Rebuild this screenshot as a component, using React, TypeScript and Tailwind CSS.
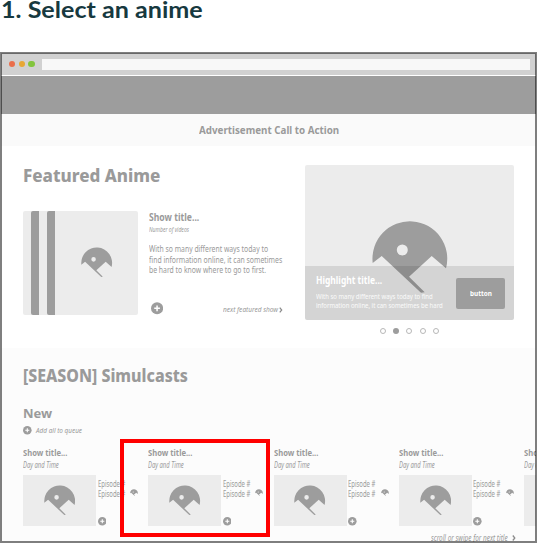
import { useLayoutEffect, useRef, useState } from "react";
import type { ReactNode } from "react";

/* A single line of text, condensed or widened to the given width. */
function Line({ w, className = "", children }: { w: number; className?: string; children: ReactNode }) {
  const ref = useRef<HTMLSpanElement>(null);
  const [scale, setScale] = useState(1);
  useLayoutEffect(() => {
    if (ref.current) setScale(w / ref.current.offsetWidth);
  }, [w]);
  return (
    <div className={`whitespace-nowrap ${className}`} style={{ width: w }}>
      <span ref={ref} className="inline-block origin-left align-top" style={{ transform: `scaleX(${scale})` }}>
        {children}
      </span>
    </div>
  );
}

function Logo({ className = "" }: { className?: string }) {
  return (
    <svg viewBox="0 0 76 74" className={className} fill="#9d9d9d">
      <path
        fillRule="evenodd"
        d="M.7 43 9.7 36 49 72.7l3.7-.4L37 56.7 59.7 36 74 48.3A37.4 37.4 0 1 0 .7 43ZM30.3 24.5a5.5 5.5 0 1 1 0 11 5.5 5.5 0 0 1 0-11Z"
      />
    </svg>
  );
}

function Plus({ className = "" }: { className?: string }) {
  return (
    <svg viewBox="0 0 12 12" className={className}>
      <circle cx="6" cy="6" r="6" fill="#9d9d9d" />
      <path d="M6 3.2v5.6M3.2 6h5.6" stroke="#fff" strokeWidth="1.5" />
    </svg>
  );
}

function Chevron({ className = "" }: { className?: string }) {
  return (
    <svg viewBox="0 0 4 6" className={className} fill="none" stroke="#8c8c8c" strokeWidth="1.3">
      <path d="M.8.5 2.8 3 .8 5.5" />
    </svg>
  );
}

function ShowCard() {
  return (
    <div className="w-[125.3px] shrink-0">
      <Line w={44} className="text-[9px] leading-[12px] font-bold">Show title...</Line>
      <Line w={36} className="mt-px text-[8px] leading-[10px] italic">Day and Time</Line>
      <div className="mt-[4.5px] flex h-[51px]">
        <div className="flex w-[73px] justify-center bg-[#ececec] pt-[10px]">
          <Logo className="h-[30.5px] w-[31.5px]" />
        </div>
        <div className="ml-[1.5px] flex flex-col justify-between pt-[4px]">
          <div>
            <Line w={27.5} className="text-[8px] leading-[10.2px]">Episode #</Line>
            <Line w={27.5} className="text-[8px] leading-[10.2px]">Episode #</Line>
          </div>
          <Plus className="size-[8.6px]" />
        </div>
        <Logo className="mt-[14px] ml-[5px] h-[7.5px] w-[8px]" />
      </div>
    </div>
  );
}

export default function App() {
  return (
    <div className="relative h-[543px] w-[537px] overflow-hidden bg-white font-['Noto_Sans','Open_Sans',sans-serif] text-[#9a9a9a]">
      <h1 className="h-[53px] pl-[1px] font-['Lato',sans-serif] text-[23px] leading-[18px] font-bold text-[#17393f]">
        <Line w={202}>1. Select an anime</Line>
      </h1>

      <div className="mx-px h-[489px] overflow-hidden">
        <div className="flex h-[23px] items-center border-b border-white bg-[#d1d1d1] pr-[6px] pl-[8px]">
          <div className="flex gap-[3.3px]">
            <span className="size-[6.4px] rounded-full bg-[#ea6e4b]" />
            <span className="size-[6.4px] rounded-full bg-[#e7a735]" />
            <span className="size-[6.4px] rounded-full bg-[#82c43c]" />
          </div>
          <div className="ml-[7px] h-[11px] flex-1 bg-[#f8f8f8]" />
        </div>
        <div className="h-[38px] bg-[#9d9d9d]" />
        <div className="flex h-[32px] items-center justify-center bg-[#fafafa]">
          <Line w={140} className="text-[10px] leading-[12px] font-bold">Advertisement Call to Action</Line>
        </div>

        <section className="flex h-[202px] pl-[22px]">
          <div className="w-[282px] pt-[19.7px]">
            <Line w={137} className="text-[17px] leading-[20px] font-extrabold">Featured Anime</Line>
            <div className="mt-[25.3px] flex">
              <div className="flex h-[104px] w-[115px] rounded-[2px] bg-[#ececec] pl-[8px]">
                <div className="w-[8px] rounded-l-[2px] bg-[#9d9d9d]" />
                <div className="ml-[7.5px] w-[8.5px] rounded-l-[2px] bg-[#9d9d9d]" />
                <Logo className="mt-[36.5px] ml-[26px] h-[30.5px] w-[31.5px]" />
              </div>
              <div className="ml-[10.5px] w-[134px]">
                <Line w={50} className="text-[10px] leading-[12px] font-bold">Show title...</Line>
                <Line w={40} className="mt-[3.5px] text-[6.5px] leading-[8px] italic">Number of videos</Line>
                <div className="mt-[10px] text-[9px] leading-[10.3px]">
                  <Line w={119}>With so many different ways today to</Line>
                  <Line w={133}>find information online, it can sometimes</Line>
                  <Line w={117}>be hard to know where to go to first.</Line>
                </div>
                <div className="mt-[27px] flex items-center pl-[2px]">
                  <Plus className="size-[12.6px]" />
                  <Line w={55} className="mt-[3px] ml-[60.5px] text-[7px] leading-[8px] italic">next featured show</Line>
                  <Chevron className="mt-[3px] ml-[0.5px] h-[6px] w-[4px]" />
                </div>
              </div>
            </div>
          </div>

          <div className="w-[209px] pt-[19px]">
            <div className="relative h-[155px] overflow-hidden rounded-[2px] bg-[#ececec]">
              <Logo className="mt-[55px] ml-[67px] h-[74px] w-[76px]" />
              <div className="absolute inset-x-0 bottom-0 flex h-[54px] bg-black/10 pr-[9px] pl-[10.5px] text-white">
                <div className="flex-1 pt-[8px]">
                  <Line w={66} className="text-[10px] leading-[12px] font-bold">Highlight title...</Line>
                  <div className="mt-[6px] text-[7.5px] leading-[8.5px] text-white/90">
                    <Line w={117}>With so many different ways today to find</Line>
                    <Line w={127}>information online, it can sometimes be hard</Line>
                  </div>
                </div>
                <div className="mt-[12px] flex h-[31px] w-[49px] items-center justify-center rounded-[2px] bg-[#9d9d9d]">
                  <Line w={22} className="text-[7px] leading-[9px] font-bold">button</Line>
                </div>
              </div>
            </div>
            <div className="mt-[8px] flex gap-[7.2px] pl-[75px]">
              <span className="size-[6px] rounded-full border border-[#b8b8b8]" />
              <span className="size-[6px] rounded-full bg-[#9d9d9d]" />
              <span className="size-[6px] rounded-full border border-[#b8b8b8]" />
              <span className="size-[6px] rounded-full border border-[#b8b8b8]" />
              <span className="size-[6px] rounded-full border border-[#b8b8b8]" />
            </div>
          </div>
        </section>

        <section className="h-[194px] bg-[#fcfcfc] pt-[18.4px] pl-[22px]">
          <Line w={165} className="text-[17px] leading-[20px] font-extrabold">[SEASON] Simulcasts</Line>
          <Line w={29} className="mt-[18.6px] text-[13px] leading-[16px] font-bold">New</Line>
          <div className="mt-[5px] flex h-[9px] items-center">
            <Plus className="size-[8.6px]" />
            <Line w={46.5} className="ml-[4.4px] text-[7px] leading-[9px] italic">Add all to queue</Line>
          </div>
          <div className="mt-[12.5px] flex">
            <ShowCard />
            <ShowCard />
            <ShowCard />
            <ShowCard />
            <ShowCard />
          </div>
          <div className="mt-[7px] flex items-center pl-[407.5px]">
            <Line w={77} className="text-[8px] leading-[10px] italic">scroll or swipe for next title</Line>
            <Chevron className="ml-[4px] h-[6px] w-[4px]" />
          </div>
        </section>
      </div>

      {/* Browser outline and the selection marker lie over the page. */}
      <div className="absolute inset-x-0 top-[52px] bottom-0 border-2 border-black/50" />
      <div className="absolute top-[439px] left-[120px] h-[98px] w-[150px] border-4 border-[#ff0000]" />
    </div>
  );
}
